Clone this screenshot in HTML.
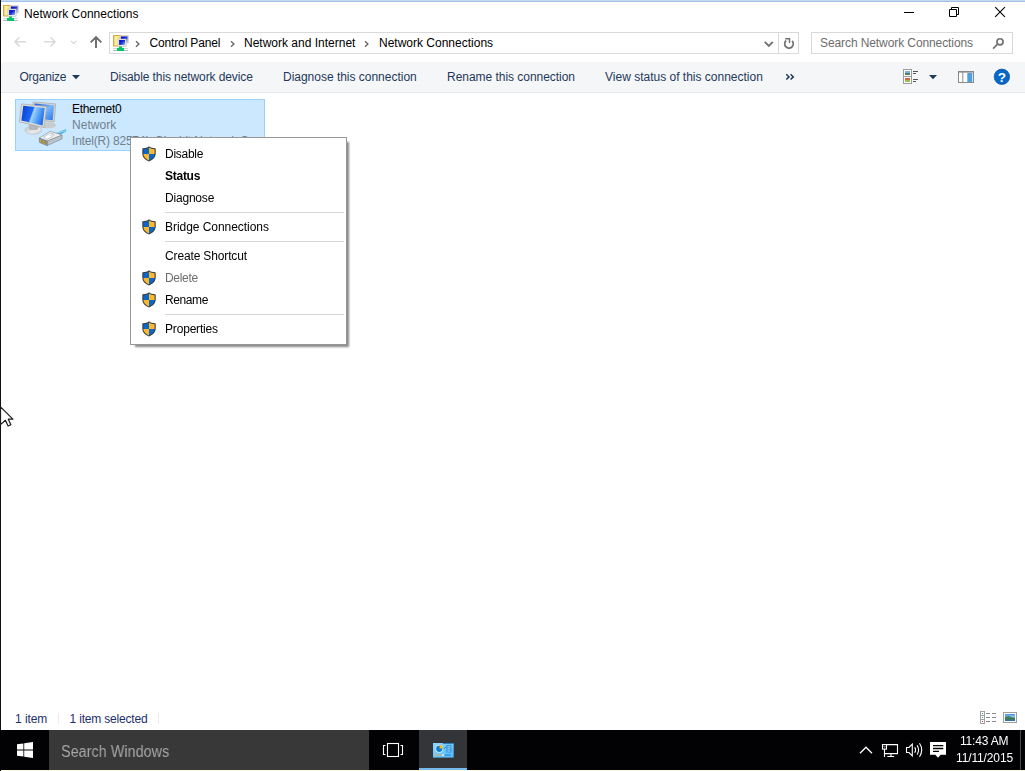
<!DOCTYPE html>
<html><head><meta charset="utf-8"><title>Network Connections</title>
<style>
html,body{margin:0;padding:0;width:1025px;height:771px;overflow:hidden;background:#fff;}
body{position:relative;font-family:"Liberation Sans",sans-serif;font-size:12px;}
.t{position:absolute;white-space:pre;line-height:16px;height:16px;font-family:"Liberation Sans",sans-serif;}
.g{will-change:transform;}
.b{position:absolute;box-sizing:border-box;}
svg{position:absolute;overflow:visible;}
</style></head><body>
<svg width="0" height="0" style="left:-10px;top:-10px"><defs>
<linearGradient id="fold" x1="0" y1="0" x2="1" y2="0"><stop offset="0" stop-color="#e9c867"/><stop offset="0.350" stop-color="#fdf3a8"/><stop offset="1" stop-color="#efd47a"/></linearGradient>
<linearGradient id="ms" x1="0" y1="0" x2="1" y2="1"><stop offset="0" stop-color="#0808c8"/><stop offset="0.500" stop-color="#1a2fd8"/><stop offset="1" stop-color="#a8c8f4"/></linearGradient>
</defs></svg>

<div class="b" style="left:0;top:0;width:1025px;height:1px;background:#c3d8ef"></div>
<div class="b" style="left:0;top:1px;width:1025px;height:1px;background:#a3c2e6"></div>
<div class="b" style="left:0;top:0;width:1px;height:771px;background:#101010"></div>
<svg style="left:3px;top:5px" width="16" height="16" viewBox="0 0 16 16"><rect x="0.500" y="0.500" width="7" height="10.500" fill="url(#fold)" stroke="#d6ab45"/><rect x="7" y="0.300" width="8.700" height="8" fill="#c9c9c4"/><rect x="8" y="1.500" width="6.500" height="5.500" fill="url(#ms)"/><rect x="5" y="4" width="8.200" height="7.500" fill="#e9e9e2" stroke="#bdbdb4" stroke-width="0.500"/><rect x="6.100" y="5" width="6" height="5" fill="url(#ms)"/><rect x="0" y="13" width="15" height="1" fill="#d4d8dc"/><rect x="0" y="15" width="15" height="1" fill="#b8bcc0"/><path d="M6 11.500H9V13H11V16H4V13H6Z" fill="#00c466"/></svg>
<span class="t" style="left:24px;top:6px;color:#000;letter-spacing:0.023px;">Network Connections</span>
<svg style="left:904px;top:12px" width="11" height="2"><rect x="0" y="0" width="10" height="1" fill="#000"/></svg>
<svg style="left:949px;top:7px" width="10" height="10" viewBox="0 0 10 10"><path d="M0.500 2.500H7.500V9.500H0.500Z M2.500 2.500V0.500H9.500V7.500H7.500" fill="none" stroke="#000" stroke-width="1"/></svg>
<svg style="left:995px;top:7px" width="10" height="10" viewBox="0 0 10 10"><path d="M0.200 0.200L9.900 9.900M9.900 0.200L0.200 9.900" fill="none" stroke="#000" stroke-width="1.100"/></svg>
<svg style="left:13px;top:36px" width="14" height="12" viewBox="0 0 14 12"><path d="M13 5.800H2M6.500 1.200L1.900 5.800L6.500 10.400" fill="none" stroke="#d9d9d9" stroke-width="1.500"/></svg>
<svg style="left:43px;top:36px" width="14" height="12" viewBox="0 0 14 12"><path d="M1 5.800H12M7.500 1.200L12.100 5.800L7.500 10.400" fill="none" stroke="#d9d9d9" stroke-width="1.500"/></svg>
<svg style="left:70px;top:40px" width="8" height="5" viewBox="0 0 8 5"><path d="M0.800 0.900L3.600 3.500L6.400 0.900" fill="none" stroke="#d4d4d4" stroke-width="1.100"/></svg>
<svg style="left:89px;top:35px" width="14" height="14" viewBox="0 0 14 14"><path d="M7 13V2M1.700 7.300L7 2L12.300 7.300" fill="none" stroke="#6c6c6c" stroke-width="1.900"/></svg>
<div class="b" style="left:109px;top:32px;width:690px;height:22px;border:1px solid #d9d9d9;background:#fff"></div>
<div class="b" style="left:778px;top:33px;width:1px;height:20px;background:#d9d9d9"></div>
<svg style="left:113px;top:35px" width="16" height="16" viewBox="0 0 16 16"><rect x="0.500" y="0.500" width="7" height="10.500" fill="url(#fold)" stroke="#d6ab45"/><rect x="7" y="0.300" width="8.700" height="8" fill="#c9c9c4"/><rect x="8" y="1.500" width="6.500" height="5.500" fill="url(#ms)"/><rect x="5" y="4" width="8.200" height="7.500" fill="#e9e9e2" stroke="#bdbdb4" stroke-width="0.500"/><rect x="6.100" y="5" width="6" height="5" fill="url(#ms)"/><rect x="0" y="13" width="15" height="1" fill="#d4d8dc"/><rect x="0" y="15" width="15" height="1" fill="#b8bcc0"/><path d="M6 11.500H9V13H11V16H4V13H6Z" fill="#00c466"/></svg>
<span class="t" style="left:149.5px;top:35px;color:#000;letter-spacing:-0.148px;">Control Panel</span>
<span class="t" style="left:244px;top:35px;color:#000;">Network and Internet</span>
<span class="t" style="left:379px;top:35px;color:#000;">Network Connections</span>
<svg style="left:135.2px;top:39.500px" width="5" height="8" viewBox="0 0 5 8"><path d="M1 1.200L3.900 4L1 6.800" fill="none" stroke="#686868" stroke-width="1.400"/></svg>
<svg style="left:229.7px;top:39.500px" width="5" height="8" viewBox="0 0 5 8"><path d="M1 1.200L3.900 4L1 6.800" fill="none" stroke="#686868" stroke-width="1.400"/></svg>
<svg style="left:364.3px;top:39.500px" width="5" height="8" viewBox="0 0 5 8"><path d="M1 1.200L3.900 4L1 6.800" fill="none" stroke="#686868" stroke-width="1.400"/></svg>
<svg style="left:764px;top:41px" width="10" height="7" viewBox="0 0 10 7"><path d="M0.800 0.800L4.800 4.900L8.800 0.800" fill="none" stroke="#727272" stroke-width="1.900"/></svg>
<svg style="left:780px;top:34px" width="18" height="18" viewBox="780 34 18 18"><path d="M786.200 40.500A4.300 4.300 0 1 0 792.200 40.900" fill="none" stroke="#727272" stroke-width="1.700"/><path d="M785.200 38.800H789.500V43" fill="none" stroke="#727272" stroke-width="1.500"/></svg>
<div class="b" style="left:811px;top:32px;width:202px;height:22px;border:1px solid #d9d9d9;background:#fff"></div>
<span class="t" style="left:820px;top:35px;color:#6d6d6d;letter-spacing:-0.093px;">Search Network Connections</span>
<svg style="left:990px;top:36px" width="16" height="16" viewBox="990 36 16 16"><circle cx="1000" cy="41.800" r="3.050" fill="none" stroke="#707070" stroke-width="1.700"/><path d="M997.800 44L993.100 48.700" stroke="#707070" stroke-width="1.700"/></svg>
<div class="b" style="left:1px;top:62px;width:1024px;height:31px;background:#f5f6f7;border-bottom:1px solid #e9eaec"></div>
<span class="t" style="left:19.5px;top:69px;color:#1e395b;letter-spacing:-0.238px;">Organize</span>
<svg style="left:72px;top:75px" width="8" height="4" viewBox="0 0 8 4"><path d="M0 0H8L4 4.300Z" fill="#1e395b"/></svg>
<span class="t" style="left:110px;top:69px;color:#1e395b;letter-spacing:-0.097px;">Disable this network device</span>
<span class="t" style="left:283px;top:69px;color:#1e395b;letter-spacing:-0.016px;">Diagnose this connection</span>
<span class="t" style="left:447px;top:69px;color:#1e395b;letter-spacing:-0.034px;">Rename this connection</span>
<span class="t" style="left:605px;top:69px;color:#1e395b;">View status of this connection</span>
<svg style="left:785px;top:73px" width="10" height="8" viewBox="0 0 10 8"><path d="M1.300 1.300L4 3.900L1.300 6.500M5.600 1.300L8.300 3.900L5.600 6.500" fill="none" stroke="#1e395b" stroke-width="1.500"/></svg>
<svg style="left:928.500px;top:75px" width="8" height="4" viewBox="0 0 8 4"><path d="M0 0H8L4 4.300Z" fill="#1e395b"/></svg>
<svg style="left:903px;top:69px" width="16" height="16" viewBox="0 0 16 16"><rect x="0.500" y="0.500" width="8" height="14" fill="#fff" stroke="#9c9c9c"/><path d="M0.500 7.500H8.500" stroke="#9c9c9c"/><rect x="2" y="2" width="5" height="2" fill="#79aee8"/><rect x="2" y="4" width="5" height="2" fill="#4f8058"/><rect x="2" y="9" width="5" height="2" fill="#d9653f"/><rect x="2" y="11" width="5" height="2" fill="#9bbf4d"/><path d="M10 2.500H15M10 4.500H13M10 10.500H15M10 12.500H13" stroke="#555"/></svg>
<svg style="left:958px;top:71px" width="16" height="12" viewBox="0 0 16 12"><rect x="0.500" y="0.500" width="15" height="11" fill="#fff" stroke="#8a8a8a"/><rect x="1" y="1" width="14" height="1" fill="#b5b5b5"/><rect x="9.300" y="2" width="5" height="9" fill="#4a9fe3"/><path d="M4.800 1V11" stroke="#8a8a8a"/></svg>
<svg style="left:993px;top:68px" width="18" height="18" viewBox="0 0 18 18"><circle cx="8.900" cy="8.800" r="7.700" fill="#0768c8" stroke="#0a4f9c" stroke-width="0.700"/><text x="8.900" y="13.700" text-anchor="middle" font-family="Liberation Sans" font-weight="700" font-size="13.500" fill="#fff">?</text></svg>
<div class="b" style="left:15px;top:99px;width:250px;height:52px;background:#cce8ff;border:1px solid #99d1ff"></div>
<span class="t" style="left:72px;top:101px;color:#000;letter-spacing:-0.305px;">Ethernet0</span>
<span class="t" style="left:72px;top:117px;color:#72808c;letter-spacing:0.055px;">Network</span>
<span class="t" style="left:72px;top:133px;color:#72808c;letter-spacing:-0.194px;">Intel(R) 82574L Gigabit Network C...</span>
<svg style="left:19px;top:101px" width="48" height="48" viewBox="0 0 48 48">
<defs><linearGradient id="scr" x1="0" y1="0.300" x2="1" y2="0.600"><stop offset="0" stop-color="#0a40d8"/><stop offset="0.420" stop-color="#1f6af0"/><stop offset="0.480" stop-color="#9fd2ff"/><stop offset="0.750" stop-color="#4d9cf5"/><stop offset="1" stop-color="#1c66e6"/></linearGradient>
<linearGradient id="scr2" x1="0" y1="0" x2="1" y2="1"><stop offset="0" stop-color="#1350e0"/><stop offset="0.500" stop-color="#7ab8fb"/><stop offset="1" stop-color="#2a74ea"/></linearGradient><linearGradient id="std" x1="0" y1="0" x2="1" y2="1"><stop offset="0" stop-color="#bfc2c5"/><stop offset="0.600" stop-color="#e9eaeb"/><stop offset="1" stop-color="#c8cbcd"/></linearGradient></defs>
<ellipse cx="29.600" cy="24.300" rx="7.500" ry="3" fill="#c9ccce"/>
<path d="M14.200 0.900L36.700 2.900L35.200 20.900L13 18.500Z" fill="#d3d4cf" stroke="#a9aba6" stroke-width="0.700"/>
<path d="M15.800 2.600L35 4.300L33.700 19.200L14.800 17.200Z" fill="url(#scr2)"/>
<ellipse cx="14.200" cy="29.200" rx="8.300" ry="4.100" fill="url(#std)" stroke="#b9bcbf" stroke-width="0.600"/>
<path d="M9.500 23L19.500 25.300L18.500 29H10.500Z" fill="#b4b7ba"/>
<path d="M2.500 2.900L27.700 5.500L25 26.600L0.400 20.900Z" fill="#dcddd8" stroke="#a6a8a3" stroke-width="0.700"/>
<path d="M4.300 4.800L25.700 7.100L23.500 24.400L2.400 19.600Z" fill="url(#scr)"/>
<path d="M36.500 32.200L47 28.100L47.200 30.300L39.800 34.600Z" fill="#43b2e3"/>
<path d="M38 32.500L46.800 29.200" stroke="#c4ebf9" stroke-width="0.700"/>
<path d="M20.200 37.100L31.100 30.300L43.100 34.100L28.100 40.100Z" fill="#edf1f4" stroke="#7f868d" stroke-width="0.600" stroke-linejoin="round"/>
<path d="M28.100 40.100L43.100 34.100V37.900L28.100 44.600Z" fill="#b9c1c9" stroke="#7f868d" stroke-width="0.600" stroke-linejoin="round"/>
<path d="M20.200 37.100L28.100 40.100V44.600L20.600 41.600Z" fill="#8f969d" stroke="#6f767d" stroke-width="0.600" stroke-linejoin="round"/>
<path d="M21.200 38.600L27.200 40.900V43.200L21.400 40.900Z" fill="#d7b640"/>
<path d="M22.400 39.100V41.300M23.800 39.600V41.900M25.200 40.100V42.400M26.500 40.700V42.900" stroke="#5d5220" stroke-width="0.500"/>
<path d="M24.500 36.200L31.300 32.100L35.300 33.400L33.600 35.500L28 38.300Z" fill="#ffffff" stroke="#8d949b" stroke-width="0.500" stroke-linejoin="round"/>
<path d="M30.300 34.300L33.300 32.800L35.300 33.400L31.900 35.200Z" fill="#d5dbe1"/>
</svg>
<div class="b" style="left:130px;top:137px;width:217px;height:208px;background:#fff;border:1px solid #979797;box-shadow:3.500px 3.500px 2px -1.500px rgba(0,0,0,0.470)"></div>
<span class="t g" style="left:165px;top:146px;color:#000;letter-spacing:-0.276px;">Disable</span>
<svg style="left:142px;top:146px" width="14" height="16" viewBox="0 0 14 16"><path d="M7 0.300C5.300 1.700 3.200 2.200 0.800 2.200C0.500 2.200 0.300 2.400 0.300 2.700V7.600C0.300 11.300 2.900 13.900 7 15.600C11.100 13.900 13.700 11.300 13.700 7.600V2.700C13.700 2.400 13.500 2.200 13.200 2.200C10.800 2.200 8.700 1.700 7 0.300Z" fill="#3c3c3c"/><path d="M7 1.600C5.400 2.700 3.500 3.200 1.400 3.300V8.050H7Z" fill="#0a67c9"/><path d="M7 1.600C8.600 2.700 10.500 3.200 12.600 3.300V8.050H7Z" fill="#fbb82d"/><path d="M1.400 8.050C1.500 10.900 3.600 13 7 14.400V8.050Z" fill="#fbb82d"/><path d="M12.600 8.050C12.500 10.900 10.400 13 7 14.400V8.050Z" fill="#0a67c9"/></svg>
<span class="t g" style="left:165px;top:168px;color:#000;font-weight:700;letter-spacing:-0.265px;">Status</span>
<span class="t g" style="left:165px;top:190px;color:#000;letter-spacing:-0.200px;">Diagnose</span>
<span class="t g" style="left:165px;top:219px;color:#000;letter-spacing:-0.046px;">Bridge Connections</span>
<svg style="left:142px;top:219px" width="14" height="16" viewBox="0 0 14 16"><path d="M7 0.300C5.300 1.700 3.200 2.200 0.800 2.200C0.500 2.200 0.300 2.400 0.300 2.700V7.600C0.300 11.300 2.900 13.900 7 15.600C11.100 13.900 13.700 11.300 13.700 7.600V2.700C13.700 2.400 13.500 2.200 13.200 2.200C10.800 2.200 8.700 1.700 7 0.300Z" fill="#3c3c3c"/><path d="M7 1.600C5.400 2.700 3.500 3.200 1.400 3.300V8.050H7Z" fill="#0a67c9"/><path d="M7 1.600C8.600 2.700 10.500 3.200 12.600 3.300V8.050H7Z" fill="#fbb82d"/><path d="M1.400 8.050C1.500 10.900 3.600 13 7 14.400V8.050Z" fill="#fbb82d"/><path d="M12.600 8.050C12.500 10.900 10.400 13 7 14.400V8.050Z" fill="#0a67c9"/></svg>
<span class="t g" style="left:165px;top:248px;color:#000;letter-spacing:-0.143px;">Create Shortcut</span>
<span class="t g" style="left:165px;top:270px;color:#6d6d6d;letter-spacing:-0.315px;">Delete</span>
<svg style="left:142px;top:270px" width="14" height="16" viewBox="0 0 14 16"><path d="M7 0.300C5.300 1.700 3.200 2.200 0.800 2.200C0.500 2.200 0.300 2.400 0.300 2.700V7.600C0.300 11.300 2.900 13.900 7 15.600C11.100 13.900 13.700 11.300 13.700 7.600V2.700C13.700 2.400 13.500 2.200 13.200 2.200C10.800 2.200 8.700 1.700 7 0.300Z" fill="#3c3c3c"/><path d="M7 1.600C5.400 2.700 3.500 3.200 1.400 3.300V8.050H7Z" fill="#0a67c9"/><path d="M7 1.600C8.600 2.700 10.500 3.200 12.600 3.300V8.050H7Z" fill="#fbb82d"/><path d="M1.400 8.050C1.500 10.900 3.600 13 7 14.400V8.050Z" fill="#fbb82d"/><path d="M12.600 8.050C12.500 10.900 10.400 13 7 14.400V8.050Z" fill="#0a67c9"/></svg>
<span class="t g" style="left:165px;top:292px;color:#000;letter-spacing:-0.393px;">Rename</span>
<svg style="left:142px;top:292px" width="14" height="16" viewBox="0 0 14 16"><path d="M7 0.300C5.300 1.700 3.200 2.200 0.800 2.200C0.500 2.200 0.300 2.400 0.300 2.700V7.600C0.300 11.300 2.900 13.900 7 15.600C11.100 13.900 13.700 11.300 13.700 7.600V2.700C13.700 2.400 13.500 2.200 13.200 2.200C10.800 2.200 8.700 1.700 7 0.300Z" fill="#3c3c3c"/><path d="M7 1.600C5.400 2.700 3.500 3.200 1.400 3.300V8.050H7Z" fill="#0a67c9"/><path d="M7 1.600C8.600 2.700 10.500 3.200 12.600 3.300V8.050H7Z" fill="#fbb82d"/><path d="M1.400 8.050C1.500 10.900 3.600 13 7 14.400V8.050Z" fill="#fbb82d"/><path d="M12.600 8.050C12.500 10.900 10.400 13 7 14.400V8.050Z" fill="#0a67c9"/></svg>
<span class="t g" style="left:165px;top:321px;color:#000;letter-spacing:-0.180px;">Properties</span>
<svg style="left:142px;top:321px" width="14" height="16" viewBox="0 0 14 16"><path d="M7 0.300C5.300 1.700 3.200 2.200 0.800 2.200C0.500 2.200 0.300 2.400 0.300 2.700V7.600C0.300 11.300 2.900 13.900 7 15.600C11.100 13.900 13.700 11.300 13.700 7.600V2.700C13.700 2.400 13.500 2.200 13.200 2.200C10.800 2.200 8.700 1.700 7 0.300Z" fill="#3c3c3c"/><path d="M7 1.600C5.400 2.700 3.500 3.200 1.400 3.300V8.050H7Z" fill="#0a67c9"/><path d="M7 1.600C8.600 2.700 10.500 3.200 12.600 3.300V8.050H7Z" fill="#fbb82d"/><path d="M1.400 8.050C1.500 10.900 3.600 13 7 14.400V8.050Z" fill="#fbb82d"/><path d="M12.600 8.050C12.500 10.900 10.400 13 7 14.400V8.050Z" fill="#0a67c9"/></svg>
<div class="b" style="left:165px;top:212px;width:179px;height:1px;background:#d7d7d7"></div>
<div class="b" style="left:165px;top:241px;width:179px;height:1px;background:#d7d7d7"></div>
<div class="b" style="left:165px;top:314px;width:179px;height:1px;background:#d7d7d7"></div>
<svg style="left:0px;top:400px" width="16" height="30" viewBox="0 400 16 30"><path d="M0.500 406.800V424.600L5.400 420.300L8.100 426L10.900 424.700L8.300 419.200H12.900Z" fill="#fff" stroke="#1c1c1c" stroke-width="1.200" stroke-linejoin="round"/></svg>
<span class="t" style="left:15px;top:711px;color:#1e2f6a;letter-spacing:-0.065px;">1 item</span>
<span class="t" style="left:69.5px;top:711px;color:#1e2f6a;letter-spacing:-0.181px;">1 item selected</span>
<div class="b" style="left:58px;top:713px;width:1px;height:11px;background:#ececec"></div>
<div class="b" style="left:158px;top:713px;width:1px;height:11px;background:#ececec"></div>
<svg style="left:980px;top:711px" width="18" height="13" viewBox="0 0 18 13"><rect x="0.500" y="0.500" width="4" height="12" fill="#fff" stroke="#a0a0a0"/><path d="M0.500 4.500H4.500M0.500 8.500H4.500" stroke="#a0a0a0"/><rect x="2" y="2" width="1" height="1" fill="#3a7a5a"/><rect x="2" y="6" width="1" height="1" fill="#4a8af0"/><rect x="2" y="10" width="1" height="1" fill="#e02020"/><path d="M6 2.500H10M12 2.500H16M6 6.500H10M12 6.500H16M6 10.500H10M12 10.500H16" stroke="#8c8c8c"/></svg>
<svg style="left:1003px;top:712px" width="14" height="11" viewBox="0 0 14 11"><defs><linearGradient id="pic" x1="0" y1="0" x2="0" y2="1"><stop offset="0" stop-color="#3f8fe8"/><stop offset="0.400" stop-color="#9cc8ea"/><stop offset="0.600" stop-color="#3f7a58"/><stop offset="1" stop-color="#2f6fc0"/></linearGradient></defs><rect x="0.500" y="0.500" width="13" height="10" fill="#fff" stroke="#a0a0a0"/><rect x="2" y="2" width="10" height="7" fill="url(#pic)"/><path d="M2 4.500L6 4L12 6.800V7.500H2Z" fill="#3f7a58" opacity="0.850"/></svg>
<div class="b" style="left:0;top:730px;width:1025px;height:40px;background:#020205"></div>
<div class="b" style="left:1px;top:770px;width:1024px;height:1px;background:#fbfbe4"></div>
<div class="b" style="left:49px;top:730px;width:320px;height:40px;background:#383838"></div>
<span class="t g" style="left:61px;top:740.5px;font-size:16px;color:#a6a6a6;line-height:22px;height:22px;transform-origin:0 0;transform:scaleX(0.902);">Search Windows</span>
<svg style="left:17px;top:742px" width="16" height="16" viewBox="0 0 16 16"><path d="M0 2.300L6.400 1.400V7.600H0ZM7.200 1.300L16 0V7.600H7.200ZM0 8.400H6.400V14.600L0 13.700ZM7.200 8.400H16V16L7.200 14.700Z" fill="#fff"/></svg>
<svg style="left:383px;top:743px" width="20" height="14" viewBox="0 0 20 14"><rect x="4.500" y="0.500" width="11" height="13" fill="none" stroke="#fff" stroke-width="1.100"/><path d="M2.500 2.500H0.500V11.500H2.500M17.500 2.500H19.500V11.500H17.500" fill="none" stroke="#fff" stroke-width="1.100"/></svg>
<div class="b" style="left:419px;top:730px;width:48px;height:40px;background:#333538"></div>
<div class="b" style="left:419px;top:768px;width:48px;height:2px;background:#76b9ed"></div>
<svg style="left:432.500px;top:742.500px" width="21" height="15" viewBox="0 0 21 15"><defs><linearGradient id="cp" x1="0" y1="0" x2="1" y2="1"><stop offset="0" stop-color="#8fd6fd"/><stop offset="1" stop-color="#52b8f6"/></linearGradient></defs><rect x="0" y="0" width="20.700" height="14.600" fill="url(#cp)"/><rect x="10" y="0" width="10.700" height="0.800" fill="#1a6fb4"/><circle cx="6.300" cy="5.700" r="3.900" fill="#eef7fd"/><circle cx="6.300" cy="5.700" r="3.200" fill="#0c80d6"/><path d="M6.600 5.400V2.100A3.400 3.400 0 0 1 9.900 5.400Z" fill="#fdb515"/><rect x="13.500" y="2.200" width="4.800" height="7.100" fill="#1389dc"/><path d="M14.300 3.800H17.500M14.300 5.900H17.500M14.300 8H17.500" stroke="#e8f4fc" stroke-width="0.900"/><circle cx="17.300" cy="3.800" r="0.600" fill="#f0a020"/><path d="M11 6L12.200 4.300L13.500 3.800" fill="none" stroke="#1389dc" stroke-width="0.800"/><path d="M2.700 12H8.800" stroke="#e9b23a" stroke-width="0.900"/><rect x="9.300" y="11.200" width="1.600" height="1.700" fill="#eaf6fe"/><path d="M11.600 12H17.500" stroke="#0f7fd6" stroke-width="0.900"/></svg>
<svg style="left:859px;top:746px" width="14" height="8" viewBox="0 0 14 8"><path d="M1 7.200L7 1.200L13 7.200" fill="none" stroke="#fff" stroke-width="1.300"/></svg>
<svg style="left:882px;top:744px" width="17" height="14" viewBox="0 0 17 14"><path d="M4.500 0.600H15.500V9.600H2.500" fill="none" stroke="#fff" stroke-width="1.100"/><rect x="0.500" y="0.600" width="4" height="4.500" fill="#020205" stroke="#fff" stroke-width="1.100"/><path d="M1.700 2.200L2.500 3.300L3.300 2.200" fill="none" stroke="#fff" stroke-width="0.700"/><path d="M2.500 5V12.900M9 9.600V12.500M5.300 12.500H12.200" fill="none" stroke="#fff" stroke-width="1.100"/></svg>
<svg style="left:906px;top:743px" width="18" height="14" viewBox="0 0 18 14"><path d="M0.500 4.500H3L6.300 1.200V12.800L3 9.500H0.500Z" fill="none" stroke="#fff" stroke-width="1.100"/><path d="M8.700 4.300Q10.500 7 8.700 9.700M11.100 2.400Q14.100 7 11.100 11.600M13.500 0.300Q17.900 7 13.500 13.700" fill="none" stroke="#fff" stroke-width="1.100"/></svg>
<svg style="left:930px;top:742px" width="16" height="16" viewBox="0 0 16 16"><path d="M0 0H16V12.700H10.700L8 15.800L5.300 12.700H0Z" fill="#fff"/><path d="M3 3.600H13.300M3 6.500H13.300M3 9.300H9" stroke="#020205" stroke-width="1.300"/></svg>
<span class="t g" style="left:960px;top:733px;color:#fff;letter-spacing:-0.189px;">11:43 AM</span>
<span class="t g" style="left:956px;top:750px;color:#fff;letter-spacing:-0.128px;">11/11/2015</span>
<div class="b" style="left:1020px;top:730px;width:1px;height:40px;background:#4a4a4a"></div>
</body></html>
